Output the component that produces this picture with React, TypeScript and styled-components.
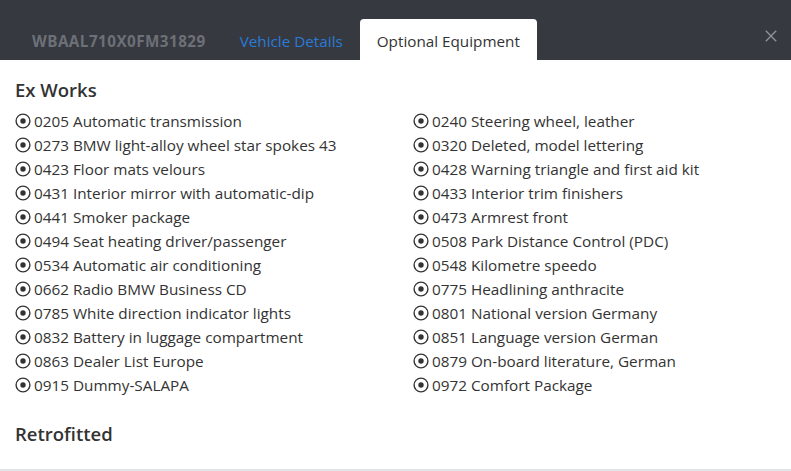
import React from "react";
import styled, { createGlobalStyle } from "styled-components";

const GlobalStyle = createGlobalStyle`
  html, body {
    margin: 0;
    padding: 0;
    background: #fff;
  }
  body {
    font-family: "Open Sans", "Noto Sans", sans-serif;
    color: #333;
  }
`;

const Modal = styled.div`
  width: 791px;
  height: 471px;
  display: flex;
  flex-direction: column;
  overflow: hidden;
  border-bottom: 2px solid #e3e4e6;
  box-sizing: border-box;
`;

const Header = styled.header`
  background-color: #363940;
  height: 60px;
  display: flex;
  align-items: flex-end;
  padding-left: 15px;
  position: relative;
  flex-shrink: 0;
`;

const Tab = styled.div<{ $kind: "vin" | "link" | "active" }>`
  height: 41px;
  display: flex;
  align-items: center;
  padding: 2px 17px 0;
  box-sizing: border-box;
  font-size: 15.25px;
  white-space: nowrap;
  letter-spacing: ${(p) => (p.$kind === "vin" ? "0.45px" : "0")};
  color: ${(p) =>
    p.$kind === "vin" ? "#6d7077" : p.$kind === "link" ? "#2a7ad8" : "#333"};
  font-weight: ${(p) => (p.$kind === "vin" ? 700 : 400)};
  background: ${(p) => (p.$kind === "active" ? "#fff" : "transparent")};
  border-radius: ${(p) => (p.$kind === "active" ? "4px 4px 0 0" : "0")};
`;

const CloseButton = styled.button`
  position: absolute;
  right: 14px;
  top: 30px;
  background: none;
  border: none;
  padding: 0;
  cursor: pointer;
  width: 12px;
  height: 12px;
  display: flex;
`;

const Body = styled.div`
  padding: 0 15px;
  flex: 1;
`;

const SectionTitle = styled.h3`
  margin: 0;
  font-size: 18.5px;
  font-weight: 600;
  color: #333;
  height: 27px;
  padding-top: 16px;
  line-height: 27px;
`;

const Grid = styled.ul`
  list-style: none;
  margin: 6px 0 0;
  padding: 0;
  display: grid;
  grid-template-columns: 398px 1fr;
`;

const Item = styled.li`
  display: flex;
  align-items: center;
  gap: 3px;
  height: 24px;
  font-size: 15.3px;
  white-space: nowrap;
`;

const Spacer = styled.div`
  height: 7px;
`;

const Radio = () => (
  <svg width="16" height="16" viewBox="0 0 16 16">
    <circle cx="8" cy="8" r="6.9" fill="none" stroke="#333" strokeWidth="1.4" />
    <circle cx="8" cy="8" r="2.7" fill="#333" />
  </svg>
);

const items = [
  "0205 Automatic transmission",
  "0240 Steering wheel, leather",
  "0273 BMW light-alloy wheel star spokes 43",
  "0320 Deleted, model lettering",
  "0423 Floor mats velours",
  "0428 Warning triangle and first aid kit",
  "0431 Interior mirror with automatic-dip",
  "0433 Interior trim finishers",
  "0441 Smoker package",
  "0473 Armrest front",
  "0494 Seat heating driver/passenger",
  "0508 Park Distance Control (PDC)",
  "0534 Automatic air conditioning",
  "0548 Kilometre speedo",
  "0662 Radio BMW Business CD",
  "0775 Headlining anthracite",
  "0785 White direction indicator lights",
  "0801 National version Germany",
  "0832 Battery in luggage compartment",
  "0851 Language version German",
  "0863 Dealer List Europe",
  "0879 On-board literature, German",
  "0915 Dummy-SALAPA",
  "0972 Comfort Package",
];

export default function App() {
  return (
    <>
      <GlobalStyle />
      <Modal>
        <Header>
          <Tab $kind="vin">WBAAL710X0FM31829</Tab>
          <Tab $kind="link">Vehicle Details</Tab>
          <Tab $kind="active">Optional Equipment</Tab>
          <CloseButton aria-label="Close">
            <svg width="12" height="12" viewBox="0 0 12 12">
              <path d="M0.8 0.8 L11.2 11.2 M11.2 0.8 L0.8 11.2" stroke="#8f9196" strokeWidth="1.4" />
            </svg>
          </CloseButton>
        </Header>
        <Body>
          <SectionTitle>Ex Works</SectionTitle>
          <Grid>
            {items.map((t) => (
              <Item key={t}>
                <Radio />
                {t}
              </Item>
            ))}
          </Grid>
          <Spacer />
          <SectionTitle>Retrofitted</SectionTitle>
        </Body>
      </Modal>
    </>
  );
}
